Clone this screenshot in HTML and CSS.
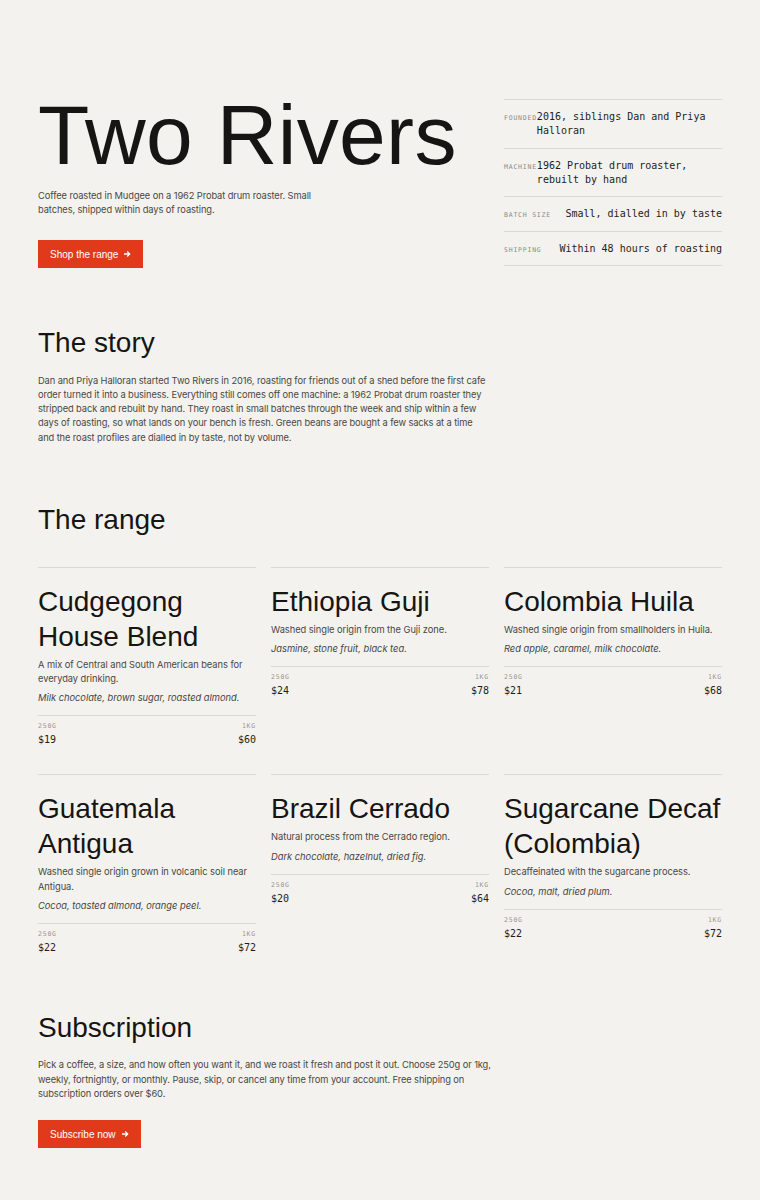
FILE: index.html
```html
<!DOCTYPE html>
<html lang="en">
<head>
  <meta charset="UTF-8"/>
  <meta name="viewport" content="width=device-width, initial-scale=1.0"/>
  <title>Two Rivers | Coffee roasted in Mudgee</title>
  <link rel="stylesheet" href="styles.css">
</head>
<body>

<main class="page">

  <section class="hero">
    <div class="hero-main">
      <h1 class="hero-title">Two Rivers</h1>
      <p class="hero-lede">Coffee roasted in Mudgee on a 1962 Probat drum roaster. Small batches, shipped within days of roasting.</p>
      <a class="btn" href="#range">Shop the range
        <svg class="btn-arrow" viewBox="0 0 8 8" width="8" height="8"><path d="M1 4h5.6M4.2 1.5 6.7 4 4.2 6.5"/></svg>
      </a>
    </div>

    <dl class="facts">
      <div class="fact"><dt>Founded</dt><dd>2016, siblings Dan and Priya Halloran</dd></div>
      <div class="fact"><dt>Machine</dt><dd>1962 Probat drum roaster, rebuilt by hand</dd></div>
      <div class="fact"><dt>Batch size</dt><dd>Small, dialled in by taste</dd></div>
      <div class="fact"><dt>Shipping</dt><dd>Within 48 hours of roasting</dd></div>
    </dl>
  </section>

  <section class="block">
    <h2 class="block-title">The story</h2>
    <p class="block-text">Dan and Priya Halloran started Two Rivers in 2016, roasting for friends out of a shed before the first cafe order turned it into a business. Everything still comes off one machine: a 1962 Probat drum roaster they stripped back and rebuilt by hand. They roast in small batches through the week and ship within a few days of roasting, so what lands on your bench is fresh. Green beans are bought a few sacks at a time and the roast profiles are dialled in by taste, not by volume.</p>
  </section>

  <section class="block" id="range">
    <h2 class="block-title">The range</h2>

    <div class="range">
      <article class="coffee">
        <h3 class="coffee-name">Cudgegong House Blend</h3>
        <p class="coffee-desc">A mix of Central and South American beans for everyday drinking.</p>
        <p class="coffee-notes">Milk chocolate, brown sugar, roasted almond.</p>
        <div class="prices">
          <div class="price"><span class="price-size">250g</span><span class="price-amt">$19</span></div>
          <div class="price price-right"><span class="price-size">1kg</span><span class="price-amt">$60</span></div>
        </div>
      </article>

      <article class="coffee">
        <h3 class="coffee-name">Ethiopia Guji</h3>
        <p class="coffee-desc">Washed single origin from the Guji zone.</p>
        <p class="coffee-notes">Jasmine, stone fruit, black tea.</p>
        <div class="prices">
          <div class="price"><span class="price-size">250g</span><span class="price-amt">$24</span></div>
          <div class="price price-right"><span class="price-size">1kg</span><span class="price-amt">$78</span></div>
        </div>
      </article>

      <article class="coffee">
        <h3 class="coffee-name">Colombia Huila</h3>
        <p class="coffee-desc">Washed single origin from smallholders in Huila.</p>
        <p class="coffee-notes">Red apple, caramel, milk chocolate.</p>
        <div class="prices">
          <div class="price"><span class="price-size">250g</span><span class="price-amt">$21</span></div>
          <div class="price price-right"><span class="price-size">1kg</span><span class="price-amt">$68</span></div>
        </div>
      </article>

      <article class="coffee">
        <h3 class="coffee-name">Guatemala Antigua</h3>
        <p class="coffee-desc">Washed single origin grown in volcanic soil near Antigua.</p>
        <p class="coffee-notes">Cocoa, toasted almond, orange peel.</p>
        <div class="prices">
          <div class="price"><span class="price-size">250g</span><span class="price-amt">$22</span></div>
          <div class="price price-right"><span class="price-size">1kg</span><span class="price-amt">$72</span></div>
        </div>
      </article>

      <article class="coffee">
        <h3 class="coffee-name">Brazil Cerrado</h3>
        <p class="coffee-desc">Natural process from the Cerrado region.</p>
        <p class="coffee-notes">Dark chocolate, hazelnut, dried fig.</p>
        <div class="prices">
          <div class="price"><span class="price-size">250g</span><span class="price-amt">$20</span></div>
          <div class="price price-right"><span class="price-size">1kg</span><span class="price-amt">$64</span></div>
        </div>
      </article>

      <article class="coffee">
        <h3 class="coffee-name">Sugarcane Decaf (Colombia)</h3>
        <p class="coffee-desc">Decaffeinated with the sugarcane process.</p>
        <p class="coffee-notes">Cocoa, malt, dried plum.</p>
        <div class="prices">
          <div class="price"><span class="price-size">250g</span><span class="price-amt">$22</span></div>
          <div class="price price-right"><span class="price-size">1kg</span><span class="price-amt">$72</span></div>
        </div>
      </article>
    </div>
  </section>

  <section class="block block-sub">
    <h2 class="block-title">Subscription</h2>
    <p class="block-text">Pick a coffee, a size, and how often you want it, and we roast it fresh and post it out. Choose 250g or 1kg, weekly, fortnightly, or monthly. Pause, skip, or cancel any time from your account. Free shipping on subscription orders over $60.</p>
    <a class="btn btn-sub" href="#">Subscribe now
      <svg class="btn-arrow" viewBox="0 0 8 8" width="8" height="8"><path d="M1 4h5.6M4.2 1.5 6.7 4 4.2 6.5"/></svg>
    </a>
  </section>

</main>

</body>
</html>
```

FILE: styles.css
```css
body {
  margin: 0;
  background: #f3f2ee;
  color: #161513;
  font-family: Inter, 'Liberation Sans', sans-serif;
}
.page {
  padding: 93px 38px 50px;
}
h1, h2, h3 {
  font-family: 'Liberation Sans', Arial, sans-serif;
  font-weight: 400;
  margin: 0;
}
p {
  margin: 0;
}

/* hero */
.hero {
  display: grid;
  grid-template-columns: repeat(3, 1fr);
  column-gap: 15px;
  align-items: start;
}
.hero-main {
  grid-column: span 2;
}
.hero-title {
  font-size: 84px;
  line-height: 1;
  letter-spacing: 0.004em;
}
.hero-lede {
  max-width: 300px;
  margin-top: 12px;
  font-size: 9.3px;
  line-height: 14px;
  letter-spacing: -0.01em;
  color: #4a4843;
}
.btn {
  display: inline-flex;
  align-items: center;
  gap: 5px;
  height: 28px;
  padding: 0 12px;
  background: #e03a1b;
  color: #fff;
  font-family: 'Liberation Sans', Arial, sans-serif;
  font-size: 10px;
  text-decoration: none;
  margin-top: 23px;
}
.btn-arrow {
  fill: none;
  stroke: #fff;
  stroke-width: 1.3;
}
.btn-sub {
  margin-top: 19px;
}

/* facts list */
.facts {
  margin: 6px 0 0;
  border-top: 1px solid #dbd9d3;
  font-family: 'DejaVu Sans Mono', 'Liberation Mono', monospace;
}
.fact {
  display: flex;
  justify-content: space-between;
  align-items: baseline;
  padding: 10px 0 9.5px;
  border-bottom: 1px solid #dbd9d3;
}
.fact dt {
  flex-shrink: 0;
  font-size: 6.5px;
  letter-spacing: 0.12em;
  text-transform: uppercase;
  color: #8e8b84;
}
.fact dd {
  margin: 0;
  font-size: 10px;
  line-height: 14px;
  color: #1e1d1a;
}

/* sections */
.block {
  margin-top: 58px;
}
.block-title {
  font-size: 28px;
  line-height: 1.2;
}
.block-text {
  max-width: 452px;
  margin-top: 14px;
  font-size: 9.3px;
  line-height: 14.3px;
  letter-spacing: -0.01em;
  color: #4a4843;
}
.block-sub {
  margin-top: 56px;
}
.block-sub .block-text {
  max-width: 462px;
}

/* coffee cards */
.range {
  display: grid;
  grid-template-columns: repeat(3, 1fr);
  column-gap: 15px;
  row-gap: 27px;
  align-items: start;
  margin-top: 30px;
}
.coffee {
  border-top: 1px solid #dbd9d3;
  padding-top: 16px;
}
.coffee-name {
  font-size: 28px;
  line-height: 35px;
}
.coffee-desc {
  margin-top: 4px;
  font-size: 9.3px;
  line-height: 14.3px;
  letter-spacing: -0.005em;
  color: #4a4843;
}
.coffee-notes {
  margin-top: 5px;
  font-size: 9.3px;
  line-height: 14px;
  font-style: italic;
  color: #46443f;
}
.prices {
  display: flex;
  justify-content: space-between;
  margin-top: 10px;
  padding-top: 6px;
  border-top: 1px solid #dbd9d3;
  font-family: 'DejaVu Sans Mono', 'Liberation Mono', monospace;
}
.price {
  display: flex;
  flex-direction: column;
}
.price-right {
  align-items: flex-end;
}
.price-size {
  font-size: 6.5px;
  line-height: 9px;
  letter-spacing: 0.12em;
  text-transform: uppercase;
  color: #9a978f;
}
.price-amt {
  margin-top: 2px;
  font-size: 10px;
  line-height: 14px;
  color: #1e1d1a;
}
```
